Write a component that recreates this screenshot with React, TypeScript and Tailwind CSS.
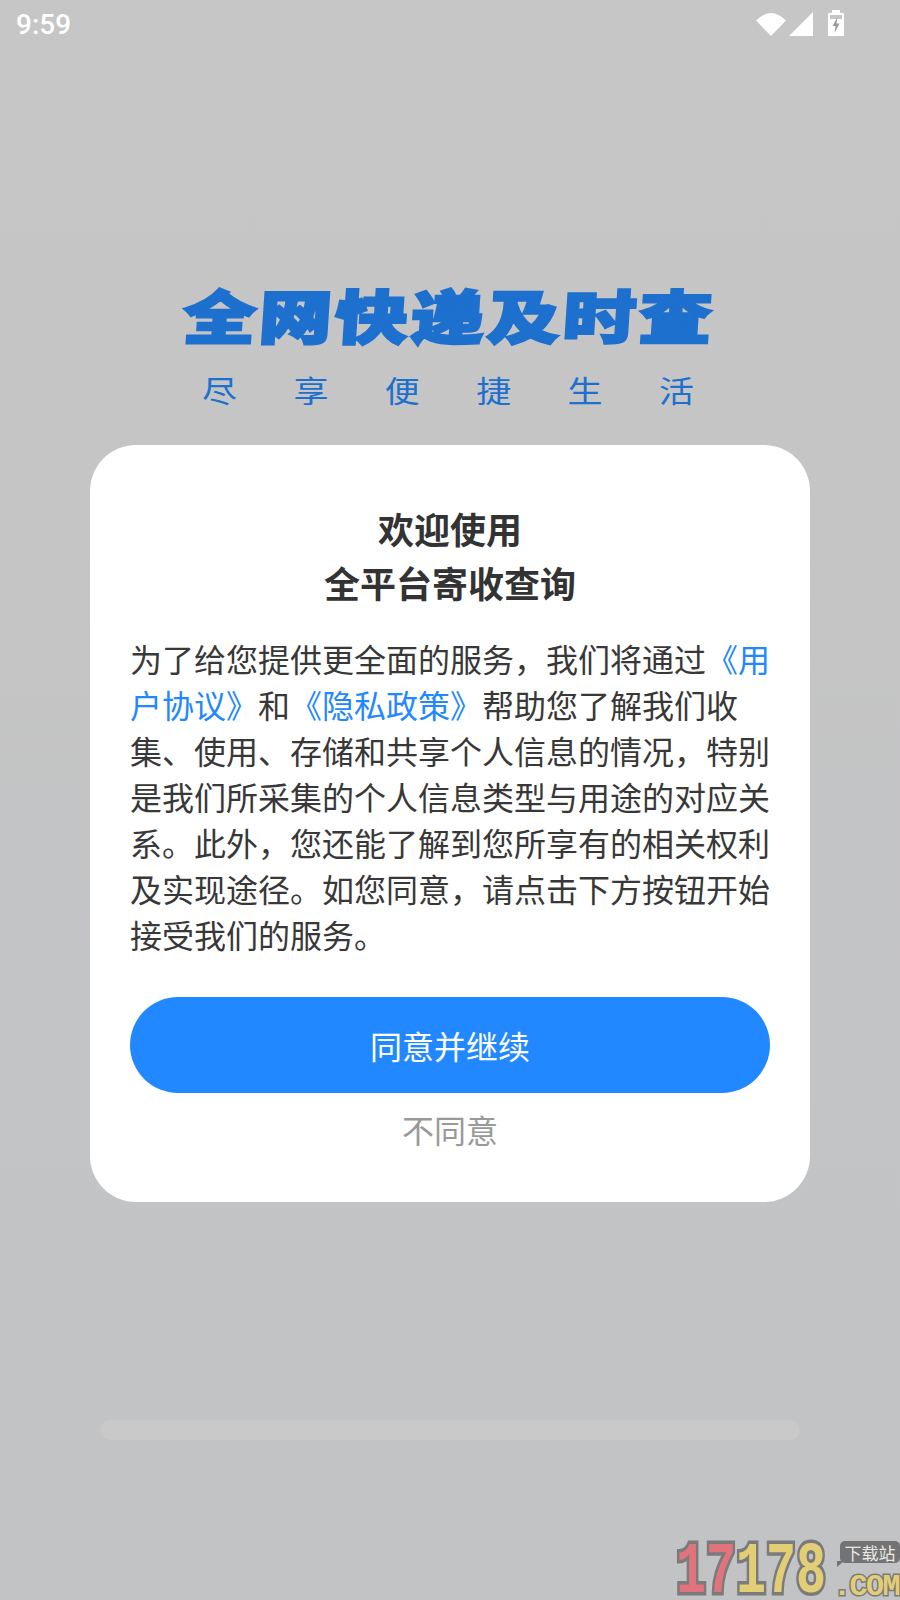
const cjk = "font-['Noto_Sans_CJK_SC','Noto_Sans',sans-serif]";

function StatusIcons() {
  return (
    <div className="flex items-start pt-[10px]">
      <svg width="30" height="26" viewBox="0 0 30 26" className="mt-[1px]">
        <path d="M0 9.5 Q15 -5.5 30 9.5 L15 25 Z" fill="#fff" />
      </svg>
      <svg width="24" height="26" viewBox="0 0 24 26" className="ml-[3px]">
        <path d="M24 2 V26 H0 Z" fill="#fff" />
      </svg>
      <svg width="16" height="26" viewBox="0 0 16 26" className="ml-[15px]">
        <path
          fillRule="evenodd"
          d="M4 0 H12 V3 H15 Q16 3 16 4 V25 Q16 26 15 26 H1 Q0 26 0 25 V4 Q0 3 1 3 H4 Z M2 5 V9 H14 V5 Z"
          fill="#fff"
        />
        <path d="M9.5 7 L4.5 16 H7.5 L6.5 23 L11.5 13.5 H8.5 Z" fill="#9a9a9a" />
      </svg>
    </div>
  );
}

function Watermark() {
  return (
    <div className="absolute bottom-0 right-0 h-[62px] w-[224px] font-['Liberation_Mono',monospace] font-bold">
      <div className="absolute left-[0px] top-[7px] flex h-[55px] origin-left scale-x-[.694] items-center text-[72px] leading-none [-webkit-text-stroke:7px_#7b7b7b] [paint-order:stroke_fill]">
        <span className="text-[#e0737c]">17</span>
        <span className="text-[#e2cf75]">178</span>
      </div>
      <div className="absolute right-0 top-[3px] flex h-[22px] w-[60px] items-center justify-center rounded-[5px] bg-[#737373] font-['Noto_Sans_CJK_SC',sans-serif] text-[17px] font-normal leading-none text-[#e8e8e8]">
        下载站
        <span className="absolute bottom-[-4px] left-[-3px] h-0 w-0 border-r-[7px] border-t-[6px] border-r-transparent border-t-[#737373]" />
      </div>
      <div className="absolute bottom-[0px] right-[1px] text-[30px] leading-[26px] tracking-[-1.5px] text-[#e2cf75] [-webkit-text-stroke:3px_#7b7b7b] [paint-order:stroke_fill]">
        .COM
      </div>
    </div>
  );
}

export default function App() {
  return (
    <div className={`relative flex h-[1600px] w-[900px] flex-col overflow-hidden bg-gradient-to-b from-[#c6c6c6] to-[#c2c3c5] ${cjk}`}>
      <div className="flex h-[50px] items-start justify-between pl-[16px] pr-[56px]">
        <span className="mt-[8px] font-['Roboto',sans-serif] text-[28px] font-medium leading-[33px] text-white">9:59</span>
        <StatusIcons />
      </div>

      <div className="mt-[232px] flex flex-col items-center pr-[4px]">
        <div className="flex h-[62px] w-[530px] -skew-x-[3deg] scale-y-[.8] justify-between text-[73px] font-black leading-[62px] text-[#1d70cd] [-webkit-text-stroke:3px_#1d70cd]">
          {'全网快递及时查'.split('').map((c) => (
            <span key={c} className="w-[74px] text-center">{c}</span>
          ))}
        </div>
        <div className="mt-[23px] flex w-[492px] scale-y-[.85] justify-between text-[35px] leading-[44px] text-[#1d70cd]">
          {'尽享便捷生活'.split('').map((c) => (
            <span key={c}>{c}</span>
          ))}
        </div>
      </div>

      <div className="mx-[90px] mt-[34px] h-[757px] rounded-[46px] bg-white px-[40px] pt-[56px]">
        <h1 className="text-center text-[36px] font-bold leading-[54px] text-[#333333]">
          欢迎使用
          <br />
          全平台寄收查询
        </h1>
        <p className="mr-[-2px] mt-[26px] text-[32px] leading-[46px] text-[#383838]">
          为了给您提供更全面的服务，我们将通过<span className="text-[#2288ff]">《用户协议》</span>和<span className="text-[#2288ff]">《隐私政策》</span>帮助您了解我们收集、使用、存储和共享个人信息的情况，特别是我们所采集的个人信息类型与用途的对应关系。此外，您还能了解到您所享有的相关权利及实现途径。如您同意，请点击下方按钮开始接受我们的服务。
        </p>
        <button className="mt-[40px] flex h-[96px] w-full items-center justify-center rounded-full bg-[#2288ff] text-[32px] text-white">
          同意并继续
        </button>
        <button className="mt-[13px] block w-full text-center text-[32px] leading-[46px] text-[#999999]">
          不同意
        </button>
      </div>

      <div className="mx-[100px] mt-[218px] h-[20px] rounded-[10px] bg-[#c9c9c9]" />

      <Watermark />
    </div>
  );
}
